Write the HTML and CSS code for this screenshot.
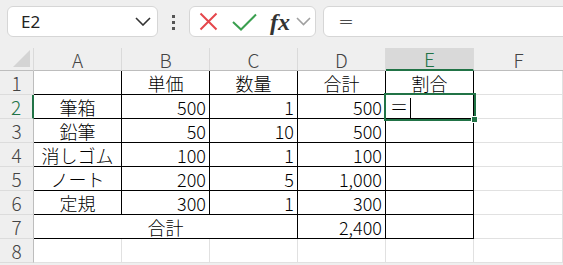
FILE: index.html
```html
<!DOCTYPE html>
<html>
<head>
  <title>割合の計算</title>
  <link rel="stylesheet" href="styles.css">
</head>
<body>
  <div class="toolbar">
    <div class="namebox">
      <span>E2</span>
      <svg width="16" height="9" viewBox="0 0 16 9"><polyline points="1,1 8,8 15,1" fill="none" stroke="#333" stroke-width="1.6"/></svg>
    </div>
    <div class="grip"><i></i><i></i><i></i></div>
    <div class="fxbox">
      <svg class="cancel" width="19" height="19" viewBox="0 0 19 19"><path d="M1.5 1.5 L17.5 17.5 M17.5 1.5 L1.5 17.5" stroke="#e5464b" stroke-width="2" fill="none"/></svg>
      <svg class="enter" width="25" height="18" viewBox="0 0 25 18"><polyline points="1,9 9,16.5 24,1.5" fill="none" stroke="#3a9f4f" stroke-width="2"/></svg>
      <span class="fx">fx</span>
      <svg class="more" width="15" height="9" viewBox="0 0 15 9"><polyline points="1,1 7.5,7.5 14,1" fill="none" stroke="#a0a0a0" stroke-width="1.6"/></svg>
    </div>
    <div class="formula">＝</div>
  </div>

  <div class="grid">
    <table class="sheet">
      <tr class="cols">
        <th class="corner"><svg width="17" height="17" viewBox="0 0 17 17"><polygon points="17,0 17,17 0,17" fill="#d4d4d4"/></svg></th>
        <th>A</th>
        <th>B</th>
        <th>C</th>
        <th>D</th>
        <th class="active">E</th>
        <th class="last">F</th>
      </tr>
      <tr>
        <th class="row">1</th>
        <td class="edge-r"></td>
        <td class="box c">単価</td>
        <td class="box c">数量</td>
        <td class="box c">合計</td>
        <td class="box c">割合</td>
        <td></td>
      </tr>
      <tr>
        <th class="row active">2</th>
        <td class="box c">筆箱</td>
        <td class="box n">500</td>
        <td class="box n">1</td>
        <td class="box n">500</td>
        <td class="box selected"><div class="sel"><b></b></div>＝<span class="caret"></span></td>
        <td></td>
      </tr>
      <tr>
        <th class="row">3</th>
        <td class="box c">鉛筆</td>
        <td class="box n">50</td>
        <td class="box n">10</td>
        <td class="box n">500</td>
        <td class="box"></td>
        <td></td>
      </tr>
      <tr>
        <th class="row">4</th>
        <td class="box c">消しゴム</td>
        <td class="box n">100</td>
        <td class="box n">1</td>
        <td class="box n">100</td>
        <td class="box"></td>
        <td></td>
      </tr>
      <tr>
        <th class="row">5</th>
        <td class="box c">ノート</td>
        <td class="box n">200</td>
        <td class="box n">5</td>
        <td class="box n">1,000</td>
        <td class="box"></td>
        <td></td>
      </tr>
      <tr>
        <th class="row">6</th>
        <td class="box c">定規</td>
        <td class="box n">300</td>
        <td class="box n">1</td>
        <td class="box n">300</td>
        <td class="box"></td>
        <td></td>
      </tr>
      <tr>
        <th class="row">7</th>
        <td class="box c" colspan="3">合計</td>
        <td class="box n">2,400</td>
        <td class="box"></td>
        <td></td>
      </tr>
      <tr>
        <th class="row">8</th>
        <td></td>
        <td></td>
        <td></td>
        <td></td>
        <td></td>
        <td></td>
      </tr>
    </table>
  </div>
</body>
</html>
```

FILE: styles.css
```css
body {
  margin: 0;
  background-color: #efefef;
  font-family: "Noto Sans CJK JP", "Noto Sans", sans-serif;
  overflow: hidden;
}

/* barra de fórmulas */
.toolbar {
  display: flex;
  align-items: flex-start;
  height: 48px;
  padding: 6px 0 0 7px;
  box-sizing: border-box;
  overflow: hidden;
}

.namebox {
  display: flex;
  flex: none;
  align-items: center;
  justify-content: space-between;
  width: 151px;
  height: 31px;
  box-sizing: border-box;
  padding: 0 6px 0 13px;
  background-color: #ffffff;
  border: 1px solid #d6d6d6;
  border-radius: 6px;
  font-family: "Noto Sans", sans-serif;
  font-size: 17px;
  color: #222;
}

.grip {
  display: flex;
  flex: none;
  flex-direction: column;
  gap: 3px;
  margin: 9px 0 0 14px;
}

.grip i {
  display: block;
  width: 3px;
  height: 3px;
  background-color: #555;
}

.fxbox {
  display: flex;
  flex: none;
  align-items: center;
  width: 127px;
  height: 31px;
  box-sizing: border-box;
  margin-left: 14px;
  padding-left: 9px;
  background-color: #ffffff;
  border: 1px solid #d6d6d6;
  border-radius: 6px;
}

.fxbox .enter {
  margin-left: 14px;
}

.fxbox .fx {
  margin-left: 13px;
  font-family: "Liberation Serif", serif;
  font-style: italic;
  font-weight: bold;
  font-size: 24px;
  line-height: 28px;
  color: #333;
}

.fxbox .more {
  margin-left: 6px;
}

.formula {
  flex: none;
  width: 300px;
  height: 31px;
  box-sizing: border-box;
  margin-left: 7px;
  padding-left: 14px;
  background-color: #ffffff;
  border: 1px solid #d6d6d6;
  border-radius: 6px;
  font-size: 16px;
  font-weight: 300;
  line-height: 29px;
  color: #222;
}

/* hoja */
.grid {
  height: 217px;
  overflow: hidden;
}

.sheet {
  border-collapse: separate;
  border-spacing: 0;
  table-layout: fixed;
  width: 563px;
  background-color: #ffffff;
  font-size: 18px;
}

.sheet th,
.sheet td {
  box-sizing: border-box;
  padding: 0 3px;
  white-space: nowrap;
  font-weight: 300;
}

.cols th {
  width: 88px;
  height: 23px;
  background-color: #efefef;
  border-right: 1px solid #dadada;
  border-bottom: 1px solid #bdbdbd;
  color: #444;
  font-size: 19px;
  text-align: center;
  line-height: 21px;
}

.cols th.corner {
  width: 34px;
  padding: 2px 3px 0 0;
  text-align: right;
  vertical-align: top;
  line-height: 0;
}

.cols th.last {
  width: 89px;
  border-right: none;
}

.cols th.active {
  background-color: #d9d9d9;
  color: #217346;
  border-bottom: 2px solid #217346;
}

.sheet td {
  height: 24px;
  line-height: 22px;
  border-right: 1px solid #e1e1e1;
  border-bottom: 1px solid #e1e1e1;
  color: #000;
}

.sheet th.row {
  height: 24px;
  background-color: #efefef;
  border-right: 1px solid #bdbdbd;
  border-bottom: 1px solid #dcdcdc;
  color: #444;
  font-size: 19px;
  text-align: center;
  line-height: 22px;
}

.sheet th.row.active {
  color: #217346;
  border-right: 2px solid #217346;
}

.sheet td.box,
.sheet td.edge-r {
  border-right-color: #000;
  border-bottom-color: #000;
}

.c {
  text-align: center;
}

.n {
  text-align: right;
}

.selected {
  position: relative;
  padding-left: 4px !important;
}

.sel {
  position: absolute;
  top: -2px;
  left: -2px;
  right: -3px;
  bottom: -3px;
  border: 2px solid #217346;
}

.sel b {
  position: absolute;
  right: -4px;
  bottom: -4px;
  width: 5px;
  height: 5px;
  background-color: #217346;
  border: 1px solid #ffffff;
}

.caret {
  display: inline-block;
  width: 1px;
  height: 20px;
  margin-left: 2px;
  background-color: #000;
  vertical-align: -4px;
}
```
